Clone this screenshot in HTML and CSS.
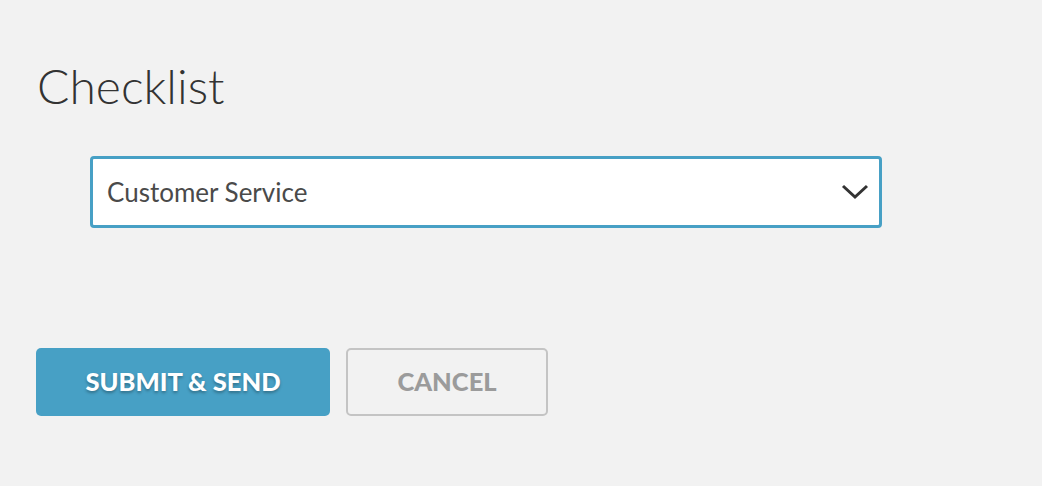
FILE: index.html
```html
<!DOCTYPE html>
<html>
<head>
<meta charset="utf-8">
<link rel="stylesheet" href="styles.css">
</head>
<body>
<div class="page">
  <h1 class="title">Checklist</h1>
  <div class="field">
    <div class="select">
      <span class="select-value">Customer Service</span>
      <svg class="chevron" width="28" height="16" viewBox="0 0 28 16"><path d="M2 2 L14 13 L26 2" fill="none" stroke="#333" stroke-width="3"/></svg>
    </div>
  </div>
  <div class="actions">
    <button class="btn btn-primary">SUBMIT &amp; SEND</button>
    <button class="btn btn-secondary">CANCEL</button>
  </div>
</div>
</body>
</html>
```

FILE: styles.css
```css
html, body {
  margin: 0;
  padding: 0;
  background: #f2f2f2;
  font-family: Lato, "Open Sans", sans-serif;
}
.page {
  padding: 56px 36px 0 36px;
}
.title {
  margin: 0;
  font-weight: 300;
  font-size: 48px;
  line-height: 60px;
  color: #333;
  padding-left: 1px;
}
.field {
  padding: 40px 0 0 54px;
}
.select {
  box-sizing: border-box;
  width: 792px;
  height: 72px;
  border: 3px solid #47a0c5;
  border-radius: 4px;
  background: #fff;
  display: flex;
  align-items: center;
  justify-content: space-between;
  padding: 0 10px 0 14px;
}
.select-value {
  font-size: 26px;
  color: #4a4a4a;
}
.chevron {
  display: block;
}
.actions {
  display: flex;
  gap: 16px;
  padding-top: 120px;
}
.btn {
  box-sizing: border-box;
  height: 68px;
  font-family: Lato, sans-serif;
  font-weight: 900;
  font-size: 25.5px;
  border-radius: 5px;
  cursor: pointer;
  padding: 0 0 3px 0;
}
.btn-primary {
  width: 294px;
  background: #47a0c5;
  border: none;
  color: #fff;
  text-shadow: 0 2px 3px rgba(0,0,0,0.3);
}
.btn-secondary {
  width: 202px;
  background: transparent;
  border: 2px solid #c4c4c4;
  color: #9b9b9b;
}
```
